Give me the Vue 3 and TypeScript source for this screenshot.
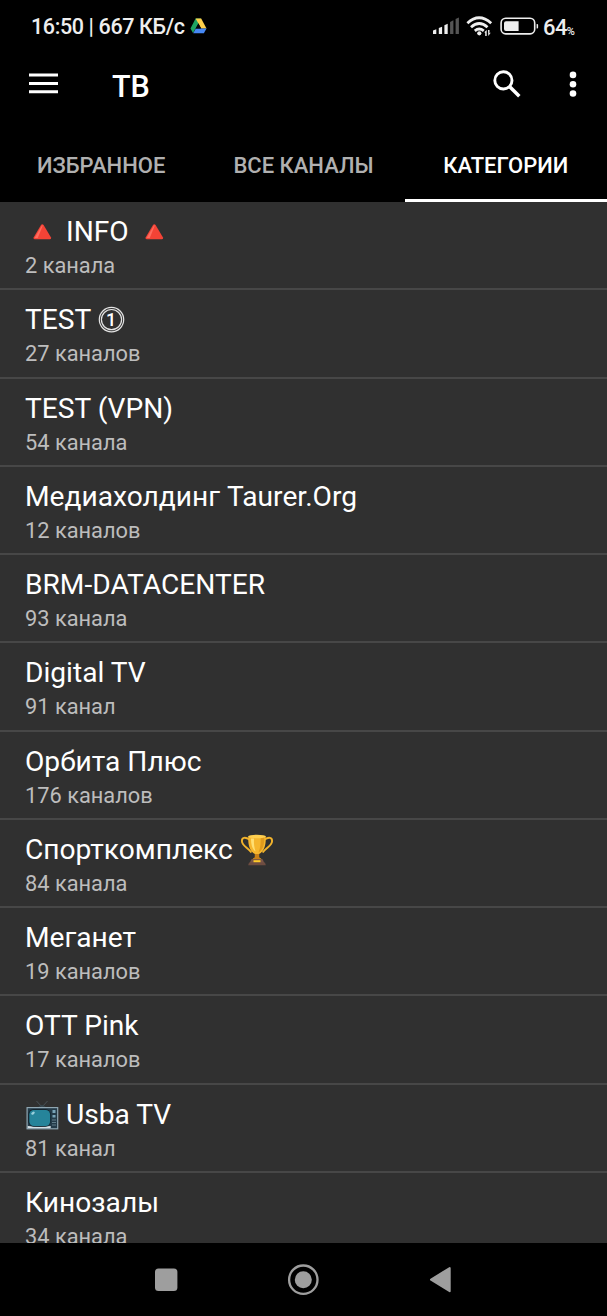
<script setup lang="ts">
type IconName = 'triangle' | 'one' | 'trophy' | 'tv'
interface Category {
  name: string
  count: string
  before?: IconName
  after?: IconName
}

const tabs: { id: string; label: string; active?: boolean }[] = [
  { id: 'fav', label: 'ИЗБРАННОЕ' },
  { id: 'all', label: 'ВСЕ КАНАЛЫ' },
  { id: 'cat', label: 'КАТЕГОРИИ', active: true },
]

const categories: Category[] = [
  { name: 'INFO', count: '2 канала', before: 'triangle', after: 'triangle' },
  { name: 'TEST', count: '27 каналов', after: 'one' },
  { name: 'TEST (VPN)', count: '54 канала' },
  { name: 'Медиахолдинг Taurer.Org', count: '12 каналов' },
  { name: 'BRM-DATACENTER', count: '93 канала' },
  { name: 'Digital TV', count: '91 канал' },
  { name: 'Орбита Плюс', count: '176 каналов' },
  { name: 'Спорткомплекс', count: '84 канала', after: 'trophy' },
  { name: 'Меганет', count: '19 каналов' },
  { name: 'OTT Pink', count: '17 каналов' },
  { name: 'Usba TV', count: '81 канал', before: 'tv' },
  { name: 'Кинозалы', count: '34 канала' },
]

function iconsOf(c: Category): { slot: 'before' | 'after'; icon?: IconName }[] {
  return [
    { slot: 'before', icon: c.before },
    { slot: 'after', icon: c.after },
  ]
}
</script>

<template>
  <div class="screen">
    <header class="status">
      <span class="clock">16:50 | 667 КБ/с</span>
      <svg class="drive" width="17" height="16" viewBox="0 0 17 16">
        <path d="M5.6 0.5h5.4L8.4 5.4 3 15 0.5 10.4z" fill="#1fa463" />
        <path d="M5.6 0.5h5.6l5.3 9.9h-5.2z" fill="#ffd04b" />
        <path d="M3.2 15.2 5.8 10.4h10.7l-2.6 4.8z" fill="#4688f4" />
        <path d="M8.4 5.6 11 10.4H5.8z" fill="#05080a" />
      </svg>
      <span class="grow"></span>
      <svg class="signal" width="28" height="18" viewBox="0 0 28 18">
        <path d="M1 13.500 4.300 12.300V17H1z M6.800 11 10.100 9.700V17H6.800z M12.400 8.300 15.700 6.800V17H12.400z" fill="#eee" />
        <path d="M18.100 5 21.400 3.300V17H18.100z M23.600 2 26.900.6V17H23.600z" fill="#555" />
      </svg>
      <svg class="wifi" width="28" height="21" viewBox="0 0 28 21">
        <g fill="none" stroke="#eee" stroke-width="2.800">
          <path d="M1.400 7.200Q13 -3.800 25.200 7.200" />
          <path d="M5 11.200Q13.200 3.800 21.500 11.200" />
          <path d="M8.800 14.800Q13.200 11.200 17.800 14.800" />
        </g>
        <circle cx="13.300" cy="17.300" r="2.100" fill="#eee" />
        <path d="M18.300 16.300 20.700 14v6h-1.500v-3.200z M22 14h1.500v3.200l1.400-.6-2.600 3.500z" fill="#eee" />
      </svg>
      <svg class="battery" width="39" height="18" viewBox="0 0 39 18">
        <rect x="1.100" y="1.300" width="33.600" height="15.600" rx="4.600" fill="none" stroke="#eee" stroke-width="1.600" />
        <path d="M6 4.200h12.600v9.900H6a2 2 0 0 1-2-2V6.200a2 2 0 0 1 2-2z" fill="#eee" />
        <path d="M36.600 7h.5q1 0 1 1v2.600q0 1-1 1h-.5z" fill="#eee" />
      </svg>
      <span class="percent">64<small>%</small></span>
    </header>

    <div class="appbar">
      <svg width="30" height="22" viewBox="0 0 30 22">
        <path d="M1 2h29M1 10.500h29M1 18.800h29" stroke="#fff" stroke-width="2.900" />
      </svg>
      <h1>ТВ</h1>
      <svg class="search" width="28" height="28" viewBox="0 0 28 28">
        <circle cx="10.400" cy="10.400" r="8.600" fill="none" stroke="#fff" stroke-width="2.900" />
        <path d="M16.500 16.500 26.300 26.300" stroke="#fff" stroke-width="3.500" />
      </svg>
      <svg class="more" width="8" height="28" viewBox="0 0 8 28">
        <circle cx="4" cy="4.900" r="3.300" fill="#fff" />
        <circle cx="4" cy="14.200" r="3.300" fill="#fff" />
        <circle cx="4" cy="23.500" r="3.300" fill="#fff" />
      </svg>
    </div>

    <nav class="tabs">
      <div v-for="t in tabs" :key="t.id" class="tab" :class="{ active: t.active }">
        <span>{{ t.label }}</span>
      </div>
    </nav>

    <main class="list">
      <div v-for="c in categories" :key="c.name" class="row">
        <div class="name">
          <template v-for="s in iconsOf(c)" :key="s.slot">
            <span v-if="s.slot === 'after'">{{ c.name }}</span>
            <svg v-if="s.icon === 'triangle'" :class="s.slot" width="34" height="34" viewBox="0 0 34 34">
              <path d="M17.300 9.300q.8 0 1.300.8l7.400 12.400q.5 1.500-1 1.800H9.600q-1.500-.3-1-1.800L16 10.100q.5-.8 1.300-.8z" fill="#f44336" />
              <path d="M17.300 10 9.500 23h3.300L17.600 11z" fill="#ff6b5e" />
            </svg>
            <svg v-else-if="s.icon === 'one'" class="one" width="27" height="34" viewBox="0 0 27 34">
              <g fill="none" stroke="#e4e4e4" stroke-width="1.200">
                <circle cx="13.500" cy="16.600" r="12.200" />
                <circle cx="13.500" cy="16.600" r="10.100" />
              </g>
              <text x="13.200" y="22.800" text-anchor="middle">1</text>
            </svg>
            <svg v-else-if="s.icon === 'trophy'" width="34" height="34" viewBox="0 0 34 34">
              <g fill="none" stroke="#f2b32c" stroke-width="1.900">
                <path d="M9.500 6.500C5 3.500 1.800 4.500 1.900 8c.1 5 5.500 6 9.500 11.500" />
                <path d="M24.500 6.500C29 3.500 32.200 4.500 32.100 8c-.1 5-5.500 6-9.500 11.500" />
              </g>
              <path d="M8.300 3.200h17.400c.5 8-1.200 15.300-6.600 17.800v3.500l3 2H12l2.900-2V21C9.500 18.500 7.800 11.200 8.300 3.200z" fill="#f5b62e" />
              <path d="M20.500 4h3.800c.3 7-1.500 13.500-5.800 15.600C20.600 14.500 21 9 20.500 4z" fill="#e09a1c" />
              <path d="M11 5.500h3c-.3 5 .2 9.500 1.700 13C12 16 11 11 11 5.500z" fill="#ffdf72" />
              <ellipse cx="17" cy="3.500" rx="8.800" ry="1.800" fill="#ffcf4f" />
              <path d="M14.900 21h4.200v3.500l3 2H12l2.900-2z" fill="#c77f18" />
              <path d="M11.300 26.300h11.400l1.500 3.700H9.800z" fill="#795548" />
              <path d="M9 29.400h16l.8 2.800H8.200z" fill="#6d4c41" />
              <path d="M13.500 27.200h7v2h-7z" fill="#ffca28" />
            </svg>
            <svg v-else-if="s.icon === 'tv'" width="34" height="34" viewBox="0 0 34 34">
              <path d="M11.500 3 17 9 22.500 3" fill="none" stroke="#4a5257" stroke-width="1" />
              <path d="M13.300 8.800q3.700-3.500 7.400 0z" fill="#37474f" />
              <rect x="2.100" y="9.600" width="30.600" height="21.200" fill="#243b49" stroke="#8fa6b2" stroke-width="1.200" />
              <path d="M2.700 28q11.500 1.600 23 0v2.200h-23z" fill="#d8e1e6" />
              <rect x="3.200" y="11" width="22.600" height="17.700" rx="5.500" fill="#14242e" />
              <rect x="4.300" y="12" width="20.800" height="16" rx="4.500" fill="#26849a" />
              <ellipse cx="8" cy="15.200" rx="2" ry="1.200" fill="#9bd0dc" transform="rotate(-35 8 15.200)" />
              <path d="M27.500 12h3v3h-3z M27.500 17h3v2.500h-3z" fill="#78a4b8" />
              <path d="M27 22h4M27 24.500h4M27 27h4" stroke="#607d8b" stroke-width="1" />
            </svg>
          </template>
        </div>
        <div class="count">{{ c.count }}</div>
      </div>
    </main>

    <footer class="nav">
      <svg width="24" height="24" viewBox="0 0 24 24">
        <rect x="1" y="0.500" width="22.400" height="22.400" rx="3.500" fill="#9e9e9e" />
      </svg>
      <svg width="32" height="32" viewBox="0 0 32 32">
        <circle cx="16.300" cy="15.700" r="14.200" fill="none" stroke="#9e9e9e" stroke-width="2.300" />
        <circle cx="16.300" cy="15.700" r="8.500" fill="#9e9e9e" />
      </svg>
      <svg width="24" height="28" viewBox="0 0 24 28">
        <path d="M2 13.600 20.700 2v23.200z" fill="#9e9e9e" stroke="#9e9e9e" stroke-width="2" stroke-linejoin="round" />
      </svg>
    </footer>
  </div>
</template>

<style>
html,
body {
  background: #000;
  overflow: hidden;
}
</style>

<style scoped>
.screen {
  width: 607px;
  height: 1316px;
  display: flex;
  flex-direction: column;
  overflow: hidden;
  background: #000;
  color: #fff;
  font-family: Roboto, 'Noto Sans', sans-serif;
}
svg {
  display: block;
  flex: none;
}
.status {
  height: 52px;
  flex: none;
  display: flex;
  align-items: center;
  padding: 0 30px 0 31px;
  box-sizing: border-box;
  color: #eee;
  font-size: 22px;
  font-weight: 500;
  white-space: nowrap;
}
.clock {
  width: 154px;
  margin-top: 2px;
  line-height: 26px;
  font-size: 21.5px;
  letter-spacing: -0.38px;
}
.drive {
  margin-left: 5px;
}
.grow {
  flex: 1;
}
.wifi {
  margin-left: 6px;
}
.battery {
  margin-left: 6px;
}
.percent {
  display: flex;
  align-items: baseline;
  margin: 3px 0 0 4px;
  width: 34px;
  height: 26px;
  line-height: 26px;
  font-size: 22px;
  letter-spacing: -0.6px;
}
.percent small {
  font-size: 11px;
  letter-spacing: 0;
}
.appbar {
  height: 84px;
  flex: none;
  display: flex;
  align-items: flex-start;
  padding: 18px 31px 0 28px;
  box-sizing: border-box;
}
.appbar > svg:first-child {
  margin-top: 3px;
}
h1 {
  margin: -1px 0 0 54px;
  flex: 1;
  font-size: 30.5px;
  line-height: 36px;
  font-weight: 500;
}
.search {
  margin-right: 48px;
}
.more {
  margin-right: -1px;
}
.tabs {
  height: 66px;
  flex: none;
  display: grid;
  grid-template-columns: repeat(3, 1fr);
}
.tab {
  display: flex;
  justify-content: center;
  box-sizing: border-box;
  padding-top: 17px;
  font-size: 22px;
  line-height: 26px;
  font-weight: 500;
  color: #b0b0b0;
  white-space: nowrap;
}
.tab.active {
  color: #fff;
  border-bottom: 3px solid #fff;
}
.list {
  flex: 1;
  min-height: 0;
  overflow: hidden;
  background: #303030;
}
.row {
  height: 88.27px;
  box-sizing: border-box;
  padding: 13px 25px 0;
  border-bottom: 2px solid #474747;
}
.name {
  height: 34px;
  display: flex;
  gap: 7px;
  font-size: 28.15px;
  line-height: 34px;
  white-space: nowrap;
}
.after {
  margin-left: 1px;
}
.one text {
  font-family: Roboto, sans-serif;
  font-size: 18px;
  font-weight: 500;
  fill: #fff;
}
.count {
  margin-top: 4px;
  font-size: 21.8px;
  line-height: 26px;
  color: #bdbdbd;
}
.nav {
  height: 73px;
  flex: none;
  display: flex;
  align-items: center;
  padding-left: 154px;
}
.nav svg:nth-child(2) {
  margin-left: 109px;
}
.nav svg:nth-child(3) {
  margin-left: 110px;
}
</style>
